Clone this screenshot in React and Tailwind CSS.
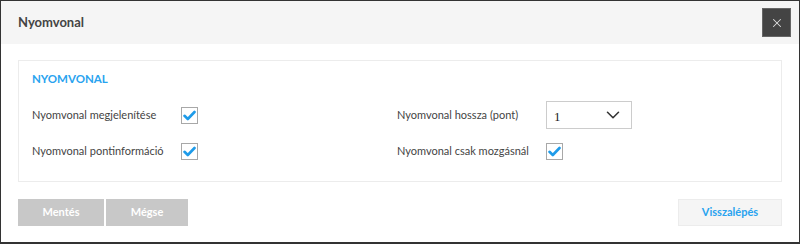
import { X, ChevronDown } from 'lucide-react';

const Check = () => (
  <div className="w-[17px] h-[17px] border border-[#a8a8a8] bg-white flex items-center justify-center">
    <svg width="13" height="11" viewBox="0 0 13 11">
      <path d="M1.5 5.8 L4.8 9 L11.5 2" fill="none" stroke="#1e9be9" strokeWidth="2.6" strokeLinecap="round" strokeLinejoin="round" />
    </svg>
  </div>
);

const Row = ({ label, children }) => (
  <div className="flex items-center h-[28px]">
    <div className="w-[149px] text-[11px] text-[#444]">{label}</div>
    {children}
  </div>
);

export default function App() {
  return (
    <div
      className="w-[800px] h-[244px] border border-b-2 border-[#333] bg-white flex flex-col"
      style={{ fontFamily: 'Lato, "Noto Sans", sans-serif' }}
    >
      <div className="h-[43px] bg-[#f5f5f5] flex items-center justify-between pl-[17px] pr-[8px] shrink-0">
        <h1 className="text-[13px] font-bold text-[#444]">Nyomvonal</h1>
        <button type="button" className="w-[29px] h-[29px] bg-[#444] border border-[#666] flex items-center justify-center text-[#ddd]">
          <X size={14} strokeWidth={1.8} />
        </button>
      </div>
      <div className="px-[17px] pt-[16px]">
        <div className="border border-[#ececec] h-[122px] px-[13px] pt-[9px]">
          <div className="text-[11.5px] font-bold text-[#29a3ef] leading-[18px]">NYOMVONAL</div>
          <div className="grid grid-cols-[365px_1fr] mt-[13px] gap-y-[8px]">
            <Row label="Nyomvonal megjelenítése">
              <Check />
            </Row>
            <Row label="Nyomvonal hossza (pont)">
              <div className="w-[86px] h-[28px] border border-[#ccc] flex items-center justify-between pl-[7px] pr-[7px]">
                <span className="text-[13px] text-[#222] mt-[3px]" style={{ fontFamily: '"Liberation Serif", serif' }}>1</span>
                <ChevronDown size={22} strokeWidth={1.7} className="text-[#333]" />
              </div>
            </Row>
            <Row label="Nyomvonal pontinformáció">
              <Check />
            </Row>
            <Row label="Nyomvonal csak mozgásnál">
              <Check />
            </Row>
          </div>
        </div>
        <div className="flex items-center justify-between mt-[17px]">
          <div className="flex gap-[2px]">
            <button type="button" className="w-[86px] h-[27px] bg-[#c8c8c8] text-white text-[11px] font-bold">Mentés</button>
            <button type="button" className="w-[82px] h-[27px] bg-[#c8c8c8] text-white text-[11px] font-bold">Mégse</button>
          </div>
          <button type="button" className="w-[104px] h-[27px] bg-[#f5f5f5] border border-[#ececec] text-[#29a3ef] text-[11px] font-bold">Visszalépés</button>
        </div>
      </div>
    </div>
  );
}
